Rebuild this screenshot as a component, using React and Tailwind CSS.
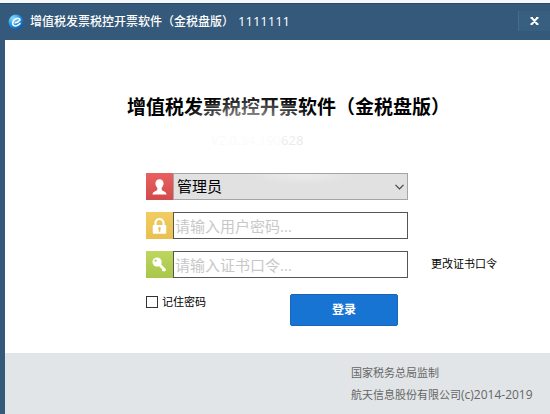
const fieldClass =
  "h-[27px] min-w-0 flex-1 rounded-none border border-[#555] bg-white px-px text-[15px] text-black outline-none placeholder:text-[#c8c8c8]";

function LogoIcon() {
  return (
    <svg viewBox="0 0 16 16" className="size-4 shrink-0" aria-hidden="true">
      <defs>
        <radialGradient id="globe" cx="0.3" cy="0.25" r="0.85">
          <stop offset="0" stopColor="#8fdcff" />
          <stop offset="0.5" stopColor="#2a9be6" />
          <stop offset="1" stopColor="#0b4fa8" />
        </radialGradient>
      </defs>
      <circle cx="8" cy="8" r="7.5" fill="url(#globe)" />
      <path
        d="M11.800 6.200C12.300 4.400 9.400 3.700 7 5.400 4.400 7.300 3.900 10.600 6 11.600c1.900.9 4.600-.2 6-2M7.300 8.800c1.700-.2 3.300-1.200 4.500-2.600"
        fill="none"
        stroke="#fff"
        strokeWidth="1.600"
        strokeLinecap="round"
      />
    </svg>
  );
}

function UserIcon() {
  return (
    <svg viewBox="0 0 28 27" className="h-full w-full" aria-hidden="true">
      <path
        d="M14 6c-2.600 0-4.200 1.800-4.200 4.500 0 1.800.8 3.300 1.900 4.300v2.200c-.6 1-4.700 1.400-5 4.700h14.600c-.3-3.300-4.400-3.700-5-4.700v-2.200c1.100-1 1.900-2.500 1.900-4.300C18.200 7.800 16.600 6 14 6z"
        fill="#fff"
      />
    </svg>
  );
}

function LockIcon() {
  return (
    <svg viewBox="0 0 28 27" className="h-full w-full" aria-hidden="true">
      <path
        d="M9.800 14v-3a4.200 4.200 0 0 1 8.400 0v3"
        fill="none"
        stroke="#fff"
        strokeWidth="2.200"
      />
      <rect x="7" y="13" width="14" height="9" rx="1" fill="#fff" />
      <path
        d="M14 15a1.500 1.500 0 0 1 .8 2.700V20h-1.600v-2.300A1.500 1.500 0 0 1 14 15z"
        fill="#e9bf50"
      />
    </svg>
  );
}

function KeyIcon() {
  return (
    <svg viewBox="0 0 28 27" className="h-full w-full" aria-hidden="true">
      <circle cx="11.500" cy="11" r="4.800" fill="#fff" />
      <circle cx="10" cy="9.500" r="1.200" fill="#b4cf55" />
      <path d="M13.500 13l6.500 7" stroke="#fff" strokeWidth="2.800" />
      <path d="M17 20l2.500-2.500" stroke="#fff" strokeWidth="2" />
    </svg>
  );
}

function TitleBar() {
  return (
    <header className="flex h-[37px] items-center border-t border-[#2a4a66] bg-[#35597a] pl-2">
      <LogoIcon />
      <h2 className="ml-[6px] flex items-center gap-1 text-[12px] font-medium text-white">
        增值税发票税控开票软件（金税盘版）
        <span className="text-[13px]">1111111</span>
      </h2>
      <button
        type="button"
        aria-label="关闭"
        className="mb-[3px] ml-auto flex h-5 w-8 items-center justify-center border-l border-[#456c8c] bg-[#385e80]"
      >
        <svg viewBox="0 0 9 8" className="h-2 w-[9px]" aria-hidden="true">
          <path
            d="M1.500 0.500l6 7M7.500 0.500l-6 7M0.500 0.800h2.500M6 0.800h2.500M0.500 7.200h2.500M6 7.200h2.500"
            stroke="#fff"
            strokeWidth="2"
          />
        </svg>
      </button>
    </header>
  );
}

function LoginForm() {
  return (
    <form
      className="mt-[23px] grid grid-cols-[262px_1fr] gap-x-[23px] gap-y-3 pl-[141px]"
      onSubmit={(e) => e.preventDefault()}
    >
      <div className="flex">
        <label
          htmlFor="user"
          aria-label="用户"
          className="h-[27px] w-[27px] bg-linear-to-b from-[#e8605f] to-[#d34a4c]"
        >
          <UserIcon />
        </label>
        <div className="relative flex-1">
          <select
            id="user"
            className="h-[27px] w-full appearance-none rounded-none border border-[#a5a5a5] bg-[#e1e1e1] bg-radial-[at_55%_0%] from-[#ececec] to-[#e1e1e1] to-30% px-[3px] text-[15px] text-black outline-none"
          >
            <option>管理员</option>
          </select>
          <svg
            viewBox="0 0 9 6"
            className="pointer-events-none absolute top-[11px] right-1 h-[6px] w-[9px]"
            aria-hidden="true"
          >
            <path d="M0.500 0.800l4 4 4-4" fill="none" stroke="#444" strokeWidth="1.200" />
          </svg>
        </div>
      </div>

      <div className="col-start-1 flex">
        <label
          htmlFor="password"
          aria-label="用户密码"
          className="h-[27px] w-[27px] bg-linear-to-b from-[#f2cd62] to-[#e9bf50]"
        >
          <LockIcon />
        </label>
        <input
          id="password"
          type="password"
          placeholder="请输入用户密码..."
          className={fieldClass}
        />
      </div>

      <div className="col-start-1 flex">
        <label
          htmlFor="pin"
          aria-label="证书口令"
          className="h-[27px] w-[27px] bg-linear-to-b from-[#bdd65f] to-[#a9c64a]"
        >
          <KeyIcon />
        </label>
        <input
          id="pin"
          type="password"
          placeholder="请输入证书口令..."
          className={fieldClass}
        />
      </div>
      <a href="#change" className="self-center text-[11px] text-black">
        更改证书口令
      </a>

      <div className="col-start-1 mt-1 flex items-start justify-between">
        <label className="flex items-center gap-1 text-[11px] text-black">
          <input
            type="checkbox"
            className="size-3 appearance-none border border-[#333] bg-white checked:bg-[#1874d2]"
          />
          记住密码
        </label>
        <button
          type="submit"
          className="mr-[10px] h-8 w-[108px] rounded-xs border border-[#1566bd] bg-[#1874d2] text-[12px] font-bold text-white"
        >
          登录
        </button>
      </div>
    </form>
  );
}

export default function App() {
  return (
    <div className="flex min-h-screen flex-col bg-[#35597a] font-['Open_Sans','Noto_Sans_CJK_SC',sans-serif]">
      <div className="h-[3px] bg-[#f4f8fb]" />
      <TitleBar />
      <main className="ml-[5px] flex-1 bg-white">
        <div className="relative pt-[52px]">
          <h1 className="pl-[122px] text-[19px] leading-[30px] font-bold text-black">
            增值税发票税控开票软件（金税盘版）
          </h1>
          <p className="mt-2 pl-[206px] text-[13px] leading-5">
            <span className="text-[#f8f8f8]">V2.0.34.190</span>
            <span className="text-[#e6e6e6]">628</span>
          </p>
          {/* soft glow over the heading and the version line */}
          <div className="pointer-events-none absolute top-[54px] left-[170px] h-[64px] w-[150px] bg-radial from-white/80 to-transparent to-70%" />
        </div>
        <LoginForm />
      </main>
      <footer className="ml-[5px] h-[61px] bg-[#e1e5e8] pt-[9px] pl-[346px] text-[11px] leading-[22px] text-[#666]">
        <p>国家税务总局监制</p>
        <p>
          航天信息股份有限公司<span className="text-[12px]">(c)2014-2019</span>
        </p>
      </footer>
    </div>
  );
}
